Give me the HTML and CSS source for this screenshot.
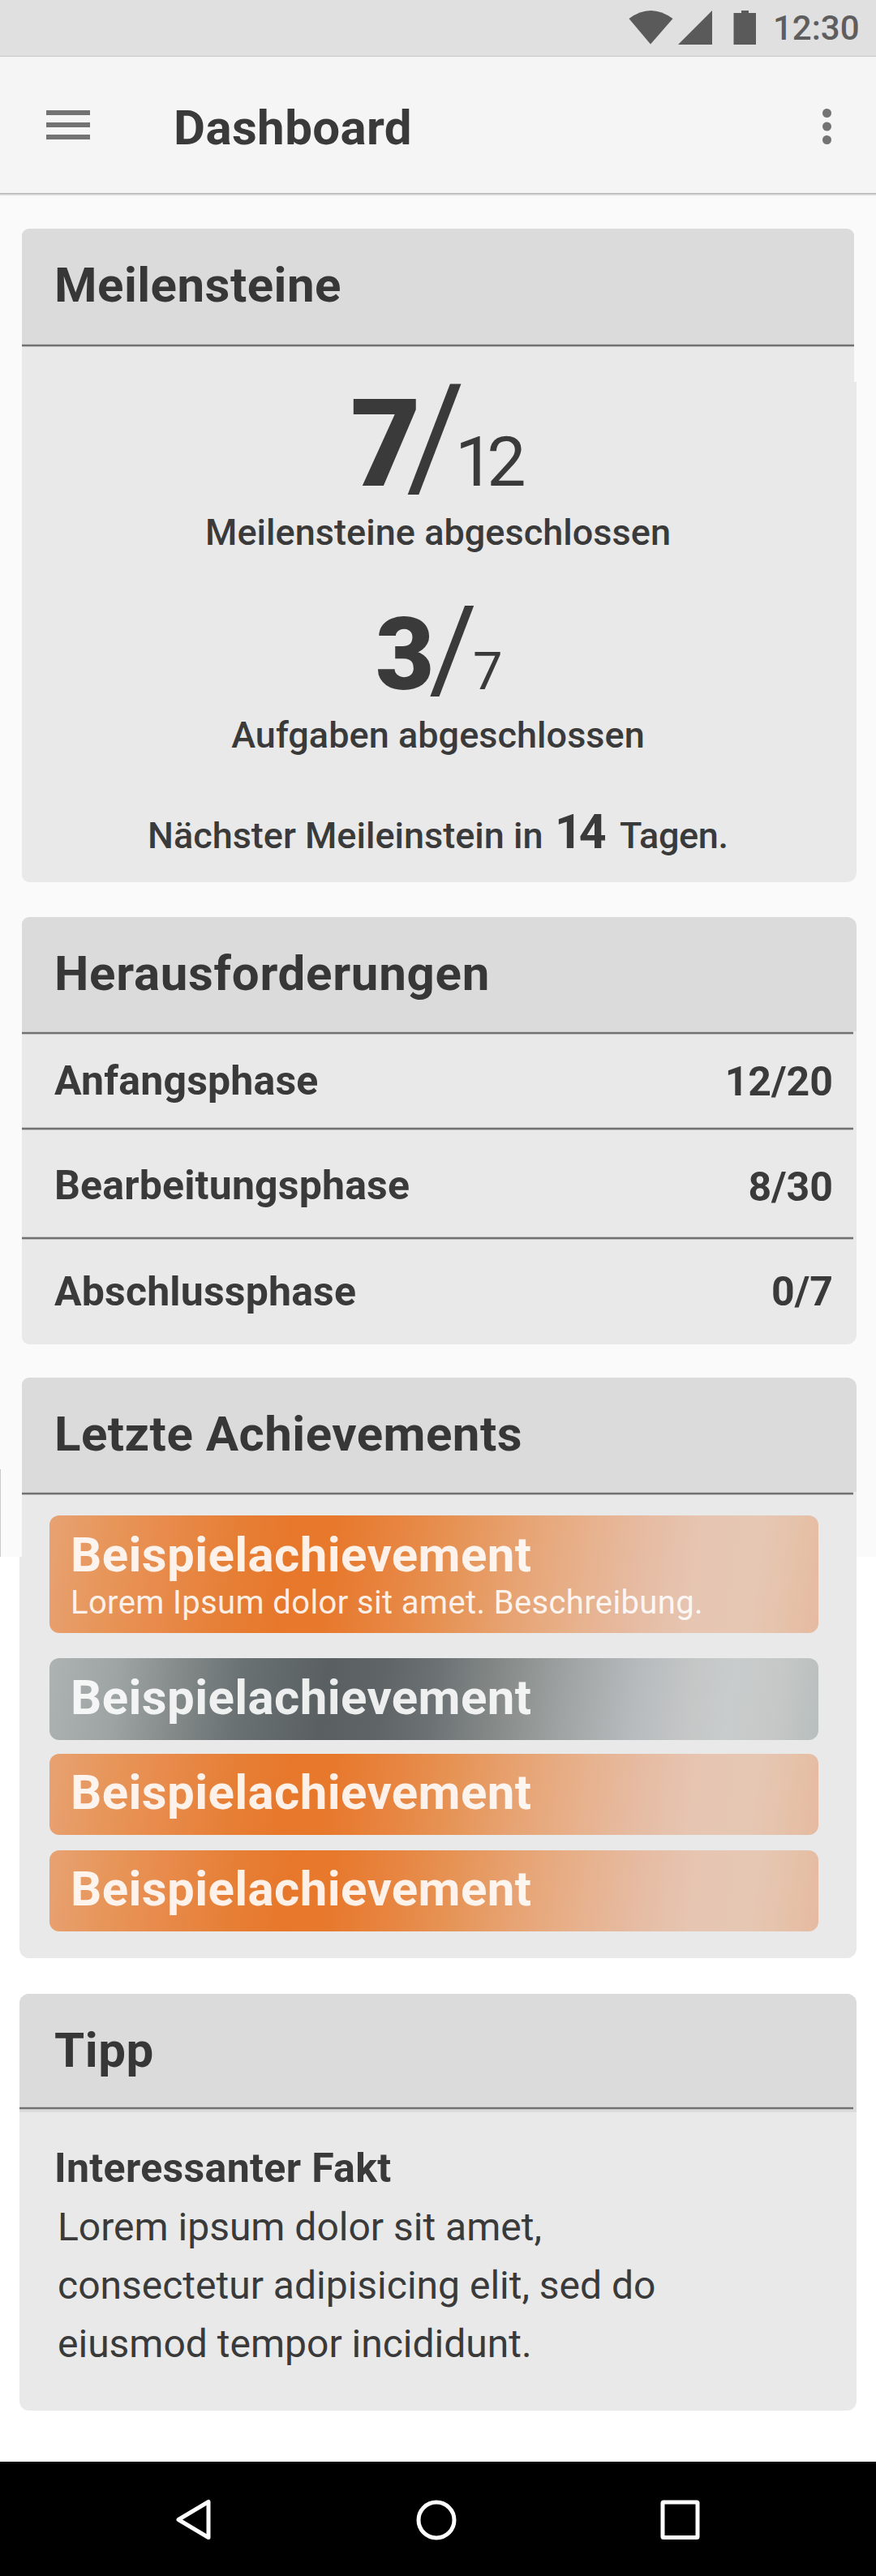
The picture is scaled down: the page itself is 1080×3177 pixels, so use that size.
FILE: index.html
```html
<!DOCTYPE html>
<html lang="de">
<head>
<meta charset="utf-8">
<title>Dashboard</title>
<link rel="stylesheet" href="styles.css">
</head>
<body>
<div class="statusbar">
  <svg class="status-icons" viewBox="0 0 160 70" width="160" height="70" aria-hidden="true">
    <path d="M0.500 23Q27 3 54.500 23L27 54.500Z"/>
    <path d="M61 55L103 13V55Z"/>
    <path d="M129.500 16H139V13H148V16H157V55H129.500Z"/>
  </svg>
  <span class="clock">12:30</span>
</div>
<header class="appbar">
  <svg class="icon-menu" viewBox="0 0 54 168" width="54" height="168" aria-hidden="true"><path d="M0 66h54v6H0zM0 81h54v6H0zM0 96h54v6H0z"/></svg>
  <h1 class="appbar-title">Dashboard</h1>
  <svg class="icon-more" viewBox="0 0 11 168" width="11" height="168" aria-hidden="true"><circle cx="5.500" cy="69.500" r="5.500"/><circle cx="5.500" cy="86" r="5.500"/><circle cx="5.500" cy="102.500" r="5.500"/></svg>
</header>
<main class="content">
  <section class="card milestones">
    <div class="card-top">
      <h2 class="card-title title-milestones">Meilensteine</h2>
      <div class="rule"></div>
    </div>
    <div class="card-body">
      <div class="fraction fraction-large"><span class="done">7</span><span class="slash">/</span><span class="total">12</span></div>
      <p class="label">Meilensteine abgeschlossen</p>
      <div class="fraction fraction-small"><span class="done">3</span><span class="slash">/</span><span class="total">7</span></div>
      <p class="label label-tasks">Aufgaben abgeschlossen</p>
      <p class="next"><span class="next-lead">Nächster Meileinstein in</span><b class="next-days">14</b><span class="next-unit">Tagen.</span></p>
    </div>
  </section>

  <section class="card challenges">
    <h2 class="card-title title-challenges">Herausforderungen</h2>
    <div class="rule"></div>
    <div class="phase phase-start"><span>Anfangsphase</span><span class="score">12/20</span></div>
    <div class="rule"></div>
    <div class="phase phase-work"><span>Bearbeitungsphase</span><span class="score">8/30</span></div>
    <div class="rule"></div>
    <div class="phase phase-end"><span>Abschlussphase</span><span class="score">0/7</span></div>
  </section>

  <section class="card achievements">
    <h2 class="card-title title-achievements">Letzte Achievements</h2>
    <div class="rule"></div>
    <div class="achievement achievement-open">
      <h3>Beispielachievement</h3>
      <p>Lorem Ipsum dolor sit amet. Beschreibung.</p>
    </div>
    <div class="achievement silver"><h3>Beispielachievement</h3></div>
    <div class="achievement"><h3>Beispielachievement</h3></div>
    <div class="achievement"><h3>Beispielachievement</h3></div>
  </section>

  <section class="card tip">
    <h2 class="card-title title-tip">Tipp</h2>
    <div class="rule"></div>
    <h3 class="tip-heading">Interessanter Fakt</h3>
    <p class="tip-text">Lorem ipsum dolor sit amet,<br>consectetur adipisicing elit, sed do<br>eiusmod tempor incididunt.</p>
  </section>
</main>
<nav class="navbar">
  <svg viewBox="0 0 50 56" width="50" height="56" aria-hidden="true"><path d="M44 4.500V48.500L7 26.500Z"/></svg>
  <svg viewBox="0 0 50 56" width="50" height="56" aria-hidden="true"><circle cx="25" cy="27" r="22"/></svg>
  <svg viewBox="0 0 50 56" width="50" height="56" aria-hidden="true"><rect x="4" y="5" width="43" height="43.500" rx="1"/></svg>
</nav>
</body>
</html>
```
FILE: styles.css
```css
* { box-sizing: border-box; }
body {
  margin: 0;
  width: 1080px;
  height: 3177px;
  display: flex;
  flex-direction: column;
  font-family: Roboto, "Liberation Sans", sans-serif;
  color: #3a3a3a;
  background:
    linear-gradient(#cacaca, #cacaca) 0 1812px / 1px 108px no-repeat,
    linear-gradient(#fafafa 1920px, #fff 1920px);
}
h1, h2, h3, p { margin: 0; }
svg { display: block; }

.statusbar {
  flex: none;
  height: 70px;
  display: flex;
  padding-left: 775px;
  background: #e0e0e0;
}
.status-icons { fill: #5a5a5a; }
.clock {
  margin-left: 18px;
  font-size: 42px;
  font-weight: 500;
  line-height: 70px;
  color: #5e5e5e;
}

.appbar {
  flex: none;
  height: 168px;
  display: flex;
  padding: 0 55px 0 57px;
  background: #f5f5f5;
  box-shadow: 0 1px 2px 1px rgba(0, 0, 0, .28);
}
.icon-menu, .icon-more { fill: #737373; }
.appbar-title {
  flex: 1;
  margin-left: 103px;
  padding-top: 7px;
  font-size: 60px;
  line-height: 161px;
  letter-spacing: .4px;
}

.content {
  flex: none;
  display: flex;
  flex-direction: column;
  height: 2798px;
  padding: 44px 24px 0 27px;
}
.card {
  flex: none;
  background: #e9e9e9;
  border-radius: 9px 12px 12px 9px;
}
.card-title {
  height: 141px;
  padding: 34.5px 0 0 40px;
  background: #dbdbdb;
  border-radius: 9px 12px 0 0;
  font-size: 60px;
  line-height: 70px;
  color: #373737;
}
.rule {
  height: 4px;
  margin-right: 4px;
  background: linear-gradient(#c6c6c6 1px, #717171 1px, #717171 3px, #c0c0c0 3px);
}

.milestones {
  height: 806px;
  background: none;
}
.card-top {
  height: 189px;
  margin-right: 3px;
  border-radius: 9px 9px 0 0;
  background: #e9e9e9;
}
.card-top .rule { margin-right: 0; }
.title-milestones {
  height: 142px;
  border-radius: 9px 9px 0 0;
  letter-spacing: .48px;
}
.card-body {
  height: 617px;
  padding-top: 8px;
  background: #e9e9e9;
  border-radius: 0 0 12px 9px;
}
.fraction {
  display: flex;
  align-items: baseline;
}
.fraction-large {
  height: 120px;
  padding-left: 405px;
  line-height: 120px;
}
.fraction-small {
  height: 100px;
  margin-top: 64px;
  padding-left: 436px;
  line-height: 100px;
}
.done { font-weight: 900; }
.fraction-large .done { width: 69px; font-size: 150px; }
.fraction-large .slash { width: 60px; font-size: 176px; }
.fraction-large .total { font-size: 86px; letter-spacing: -9px; }
.fraction-small .done { width: 66px; font-size: 125px; }
.fraction-small .slash { width: 54px; font-size: 144px; }
.fraction-small .total { font-size: 65px; }
.label {
  margin-top: 28px;
  padding-right: 3px;
  text-align: center;
  font-size: 45px;
  font-weight: 500;
  line-height: 60px;
  letter-spacing: .04px;
}
.label-tasks { margin-top: 26px; }
.next {
  display: flex;
  align-items: baseline;
  height: 60px;
  margin-top: 59px;
  padding-left: 155px;
  font-size: 45px;
  font-weight: 500;
  line-height: 60px;
}
.next-lead { width: 502px; }
.next-days {
  width: 80px;
  font-size: 59px;
  letter-spacing: -4px;
}
.next-unit { letter-spacing: -.4px; }

.challenges {
  height: 527px;
  margin-top: 43px;
}
.title-challenges { letter-spacing: .72px; }
.phase {
  display: flex;
  justify-content: space-between;
  padding: 0 29px 0 40px;
  font-size: 50px;
  font-weight: 700;
  line-height: 60px;
  letter-spacing: .18px;
}
.phase-start { height: 114px; padding-top: 27px; }
.phase-work { height: 131px; padding-top: 38px; }
.phase-end { padding-top: 34px; }
.score { letter-spacing: 0; }
.phase-start .score { padding-top: 1px; }
.phase-work .score { padding-top: 2px; }

.achievements {
  position: relative;
  height: 716px;
  margin-top: 41px;
}
/* lower part of the panel reaches 3px further left */
.achievements::before {
  content: "";
  position: absolute;
  left: -3px;
  top: 221px;
  bottom: 0;
  width: 20px;
  background: #e9e9e9;
  border-radius: 0 0 0 12px;
}
.title-achievements { letter-spacing: .48px; }
.achievement {
  position: relative;
  width: 948px;
  height: 100px;
  margin: 19px 0 0 34px;
  padding: 17.5px 0 0 26px;
  border-radius: 12px;
  color: rgba(255, 255, 255, .89);
  background: linear-gradient(98deg, #e7a273 0, #e7965a 8%, #e88b4c 15%, #e67f36 24%, #e7782b 31%, #e7792d 37%, #e78744 46%, #e69355 52%, #e7a271 60%, #e7b08a 68%, #e6bba2 76%, #e6c6b3 84%, #e6c7b4 91%, #e5c1a8 96%, #e6baa0 100%);
}
.achievement h3 {
  font-size: 60px;
  line-height: 60px;
  letter-spacing: .4px;
}
.achievement-open {
  height: 145px;
  margin-top: 25px;
  padding-top: 18.5px;
}
.achievement-open p {
  margin-top: 4px;
  font-size: 40px;
  line-height: 50px;
  letter-spacing: .375px;
}
.silver {
  height: 101px;
  margin-top: 31px;
  padding-top: 18.5px;
  background: linear-gradient(98deg, #adb2b2 0, #9ea3a3 9%, #848a89 17%, #6a7173 25%, #5a6062 36%, #5f6466 43%, #6c7274 50%, #858a88 58%, #a0a4a4 67%, #b7bbbd 76%, #c5c7c7 83%, #c8cccc 88%, #c5c8c6 94%, #b8bebe 100%);
}
.silver + .achievement { margin-top: 17px; }

.tip {
  height: 514px;
  margin: 44px 0 0 -3px;
  border-radius: 12px;
  background: linear-gradient(#dbdbdb 146px, #e9e9e9 146px);
}
.title-tip {
  height: 139px;
  padding-left: 43px;
  border-radius: 12px 12px 0 0;
  letter-spacing: .6px;
}
.tip-heading {
  margin-top: 42px;
  padding-left: 43px;
  font-size: 50px;
  line-height: 60px;
  letter-spacing: .35px;
}
.tip-text {
  margin-top: 7px;
  padding-left: 47px;
  font-size: 48px;
  line-height: 72px;
}

.navbar {
  flex: none;
  height: 141px;
  display: flex;
  justify-content: space-between;
  padding: 43px 217px 0 213px;
  background: #000;
  border-top: 2px solid #0e0f10;
}
.navbar svg {
  fill: none;
  stroke: #fff;
  stroke-width: 5;
  stroke-linejoin: round;
}
```
